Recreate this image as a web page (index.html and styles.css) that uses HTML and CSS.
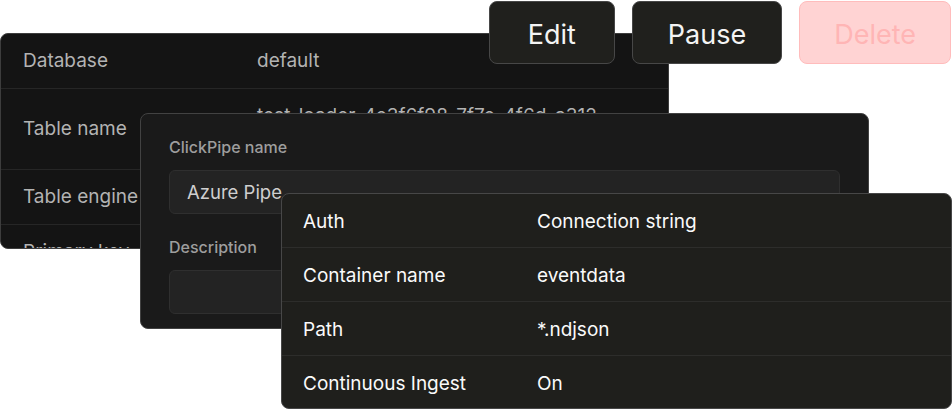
FILE: index.html
```html
<!DOCTYPE html>
<html lang="en">
<head>
    <meta charset="UTF-8">
    <meta name="viewport" content="width=device-width, initial-scale=1.0">
    <title>ClickPipe details</title>
    <link rel="stylesheet" href="styles.css">
</head>
<body>
    <div class="stage">
        <div class="card card-table">
            <div class="row">
                <span class="label">Database</span>
                <span class="value">default</span>
            </div>
            <div class="row">
                <span class="label">Table name</span>
                <span class="value">test-loader-4e3f6f98-7f7e-4f6d-a312-<br>9c1b2d4e5f60</span>
            </div>
            <div class="row">
                <span class="label">Table engine</span>
                <span class="value">MergeTree</span>
            </div>
            <div class="row">
                <span class="label">Primary key</span>
                <span class="value">id</span>
            </div>
        </div>

        <div class="card card-form">
            <label class="field-label">ClickPipe name</label>
            <div class="input">Azure Pipe</div>
            <label class="field-label">Description</label>
            <div class="input input-empty"></div>
        </div>

        <div class="card card-source">
            <div class="row">
                <span class="label">Auth</span>
                <span class="value">Connection string</span>
            </div>
            <div class="row">
                <span class="label">Container name</span>
                <span class="value">eventdata</span>
            </div>
            <div class="row">
                <span class="label">Path</span>
                <span class="value">*.ndjson</span>
            </div>
            <div class="row">
                <span class="label">Continuous Ingest</span>
                <span class="value">On</span>
            </div>
        </div>

        <div class="actions">
            <button class="btn">Edit</button>
            <button class="btn">Pause</button>
            <button class="btn btn-danger">Delete</button>
        </div>
    </div>
</body>
</html>
```

FILE: styles.css
```css
* {
    box-sizing: border-box;
}
body {
    margin: 0;
    background-color: #ffffff;
    font-family: Inter, "Noto Sans", sans-serif;
}
.stage {
    position: relative;
    width: 952px;
    height: 409px;
    overflow: hidden;
}
.actions {
    position: absolute;
    top: 1px;
    right: 1px;
    display: flex;
    gap: 17px;
}
.btn {
    min-width: 126px;
    height: 63px;
    padding: 3px 35px 0;
    font-family: inherit;
    font-size: 27px;
    color: #f4f4f4;
    background-color: #20201d;
    border: 1px solid #474747;
    border-radius: 8px;
}
.btn-danger {
    padding: 3px 34px 0;
    color: #ffb5b5;
    background-color: #ffd3d3;
    border-color: #ffbcbc;
}
.card {
    position: absolute;
    overflow: hidden;
    border-radius: 8px;
}
.row {
    display: grid;
    grid-template-columns: 234px 1fr;
    align-items: center;
    padding: 14px 22px;
    font-size: 19px;
    line-height: 26px;
    border-bottom: 1px solid #2d2d2b;
}
.row:last-child {
    border-bottom: none;
}
.card-table {
    left: 0;
    top: 33px;
    width: 669px;
    height: 216px;
    background-color: #141414;
    border: 1px solid #3d3d3d;
}
.card-table .row {
    color: #b3b3b3;
    border-bottom-color: #262626;
}
.card-form {
    left: 140px;
    top: 113px;
    width: 729px;
    height: 216px;
    padding: 23px 28px;
    background-color: #1a1a1a;
    border: 1px solid #424242;
}
.field-label {
    display: block;
    font-size: 16px;
    font-weight: 500;
    line-height: 20px;
    color: #9e9e9e;
}
.input {
    height: 44px;
    margin: 13px 0 23px;
    padding: 0 17px;
    font-size: 18.5px;
    line-height: 42px;
    color: #cfcfcf;
    background-color: #232323;
    border: 1px solid #2f2f2f;
    border-radius: 6px;
}
.input-empty {
    margin-bottom: 0;
}
.card-source {
    left: 281px;
    top: 193px;
    width: 671px;
    height: 216px;
    background-color: #1f1f1c;
    border: 1px solid #474747;
}
.card-source .row {
    color: #fafafa;
    padding: 15px 21px 12px;
}
```
